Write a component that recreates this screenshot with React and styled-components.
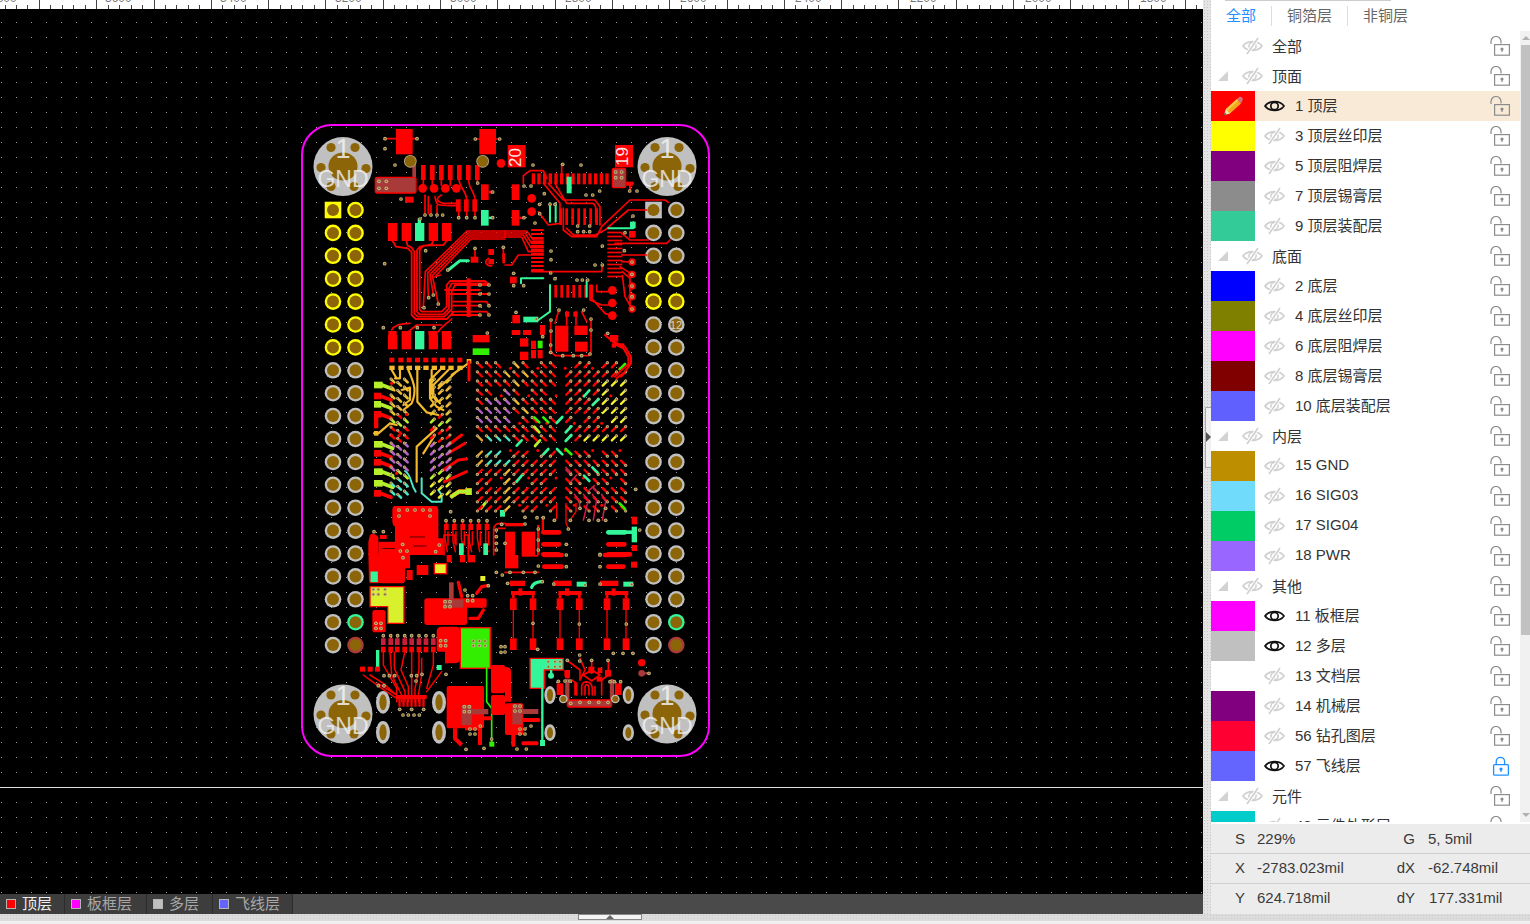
import React from "react";
import styled, { createGlobalStyle } from "styled-components";

const Global = createGlobalStyle`
  html, body { margin: 0; padding: 0; background: #fff; overflow: hidden; }
  #root { width: 1530px; height: 924px; }
  * { box-sizing: border-box; }
`;
const FONT = `"Liberation Sans", "Noto Sans CJK SC", Arial, sans-serif`;

const Page = styled.div`
  width: 1530px; height: 924px; display: flex; flex-direction: column; overflow: hidden; font-family: ${FONT}; position: relative;
`;
const Main = styled.div`display: flex; height: 914px;`;
const Canvas = styled.div`width: 1203px; display: flex; flex-direction: column;`;
const Ruler = styled.svg`display: block; width: 1203px; height: 9px; background: #fff; flex: none;`;
const Stage = styled.svg`display: block; width: 1203px; height: 885px; background: #000; flex: none;`;
const TabBar = styled.div`height: 20px; flex: none; background: #4a4a4a; display: flex;`;
const BoardTab = styled.div`
  display: flex; align-items: center; gap: 6px; padding-left: 6px; width: ${p => p.$w}px;
  background: #3d3d3d; border-right: 1px solid #2b2b2b; font-size: 15px; line-height: 20px;
  color: ${p => (p.$active ? "#f0f0f0" : "#a8a8a8")};
`;
const TabChip = styled.span`width: 10px; height: 10px; flex: none; background: ${p => p.$color}; border: 1px solid #b5b5b5;`;
const Splitter = styled.div`
  width: 8px; position: relative;
  background-color: #e4e4e4;
  background-image: radial-gradient(#c8c8c8 1px, transparent 1px);
  background-size: 3px 3px;
`;
const SplitHandle = styled.div`
  position: absolute; left: 2px; top: 407px; width: 6px; height: 61px; background: #efefef; border-left: 1px solid #aaa;
  border-top: 1px solid #aaa; border-bottom: 1px solid #aaa;
  &::after { content: ""; position: absolute; left: 0; top: 24px; border-left: 5px solid #555; border-top: 5px solid transparent; border-bottom: 5px solid transparent; }
`;
const Panel = styled.div`width: 319px; display: flex; flex-direction: column; background: #fff;`;
const LayerTabs = styled.div`height: 31px; flex: none; display: flex; align-items: center; position: relative; padding-top: 1px;
  &::before { content: ""; position: absolute; left: 14px; top: 0; width: 166px; height: 1px; background: #ccc; }
`;
const LayerTab = styled.div`
  height: 20px; line-height: 20px; padding: 0 15px; font-size: 15px; color: ${p => (p.$active ? "#1e90ff" : "#666")};
  border-right: ${p => (p.$last ? "none" : "1px solid #ddd")};
`;
const ListWrap = styled.div`height: 791px; flex: none; display: flex; overflow: hidden;`;
const List = styled.div`width: 309px; overflow: hidden;`;
const Row = styled.div`
  height: 30px; display: flex; align-items: center; padding-right: 10px; background: ${p => (p.$active ? "#f9ead8" : "transparent")};
`;
const Swatch = styled.div`width: 44px; height: 30px; flex: none; background: ${p => p.$color}; display: flex; align-items: center; justify-content: center;`;
const Caret = styled.div`width: 32px; height: 30px; flex: none; display: flex; align-items: flex-start; padding: 10px 0 0 7px;`;
const GroupEye = styled.div`width: 29px; flex: none; display: flex; margin-left: -1px; margin-right: 1px;`;
const ItemEye = styled.div`width: 40px; flex: none; display: flex; padding-left: 9px; margin-bottom: 1px;`;
const RowText = styled.div`font-size: 15px; color: #333; white-space: nowrap; padding-bottom: ${p => p.$lift}px;`;
const LockSlot = styled.div`margin-left: auto; width: 20px; height: 20px; flex: none;`;
const Scrollbar = styled.div`width: 10px; background: #f1f1f1; position: relative; padding-left: 1px; display: flex; flex-direction: column;`;
const ScrollArrow = styled.div`height: 14px; flex: none; display: flex; justify-content: center; align-items: center;
  &::after { content: ""; border-left: 4px solid transparent; border-right: 4px solid transparent;
    ${p => (p.$down ? "border-top: 4px solid #b0b0b0;" : "border-bottom: 4px solid #b0b0b0;")} }
`;
const ScrollThumb = styled.div`height: 590px; flex: none; background: #c1c1c1;`;
const ScrollRest = styled.div`flex: 1;`;
const Status = styled.div`margin-top: 2px; flex: 1; background: #ececec; display: flex; flex-direction: column;`;
const StatusRow = styled.div`
  height: 30px; display: flex; align-items: center; font-size: 15px; color: #3a3a3a; padding-bottom: ${p => p.$lift}px;
  border-bottom: ${p => (p.$last ? "none" : "1px solid #cfcfcf")};
`;
const StatLabel = styled.div`width: ${p => p.$w}px; text-align: right; flex: none;`;
const StatValue = styled.div`width: ${p => p.$w}px; margin-left: ${p => p.$m}px; flex: none; white-space: nowrap;`;
const Strip = styled.div`
  height: 7px; flex: none; background-color: #dcdcdc;
  background-image: radial-gradient(#c9c9c9 1px, transparent 1px); background-size: 3px 3px;
`;
const StripFoot = styled.div`height: 3px; flex: none; background: #f0f0f0;`;
const StripHandle = styled.div`
  position: absolute; left: 578px; top: 914px; width: 64px; height: 6px; background: #f4f4f4; border: 1px solid #888;
  &::after { content: ""; position: absolute; left: 27px; top: 0; border-left: 4px solid transparent; border-right: 4px solid transparent; border-bottom: 4px solid #666; }
`;

/* ---------- icons ---------- */
const EyeOpen = () => (
  <svg width="21" height="14" viewBox="0 0 21 14">
    <path d="M1 7C5 1.2 16 1.2 20 7C16 12.8 5 12.8 1 7Z" fill="none" stroke="#111" strokeWidth="1.7" />
    <circle cx="10.5" cy="7" r="3.7" fill="none" stroke="#111" strokeWidth="1.7" />
  </svg>
);
const EyeOff = () => (
  <svg width="21" height="18" viewBox="0 0 21 18">
    <path d="M1 9C5 3.2 16 3.2 20 9C16 14.8 5 14.8 1 9Z" fill="none" stroke="#d0d0d0" strokeWidth="1.7" />
    <circle cx="10.5" cy="9" r="3.6" fill="none" stroke="#d0d0d0" strokeWidth="1.5" />
    <path d="M16 1L5 17" stroke="#fff" strokeWidth="3.5" />
    <path d="M16 1L5 17" stroke="#cfcfcf" strokeWidth="1.6" />
  </svg>
);
const CaretIcon = () => (
  <svg width="10" height="10" viewBox="0 0 10 10"><path d="M10 0V10H0Z" fill="#d2d2d2" /></svg>
);
const LockIcon = () => (
  <svg width="20" height="20" viewBox="0 0 20 20">
    <path d="M1 8V5.5a5 5 0 0 1 10 0V7.5" fill="none" stroke="#8c8c8c" strokeWidth="1.2" />
    <rect x="4.6" y="8.6" width="14.8" height="10.6" fill="none" stroke="#8c8c8c" strokeWidth="1.2" />
    <circle cx="12" cy="13" r="1.6" fill="#8c8c8c" />
    <rect x="11.4" y="13" width="1.2" height="3" fill="#8c8c8c" />
  </svg>
);
const LockBlue = () => (
  <svg width="20" height="20" viewBox="0 0 20 20">
    <path d="M7 9V5.5a4.2 4.2 0 0 1 8.4 0V9" fill="none" stroke="#1e90ff" strokeWidth="1.3" transform="translate(-.8 0)" />
    <rect x="3.6" y="8.6" width="14.8" height="10.6" rx="1" fill="none" stroke="#1e90ff" strokeWidth="1.3" />
    <circle cx="11" cy="13" r="1.6" fill="#1e90ff" />
    <rect x="10.4" y="13" width="1.2" height="3" fill="#1e90ff" />
  </svg>
);
const Pencil = () => (
  <svg width="22" height="20" viewBox="0 0 22 20">
    <path d="M2 19L4 13L15 3L19 7.5L8 17.5Z" fill="#f1a91c" />
    <path d="M4 13L15 3L16.5 4.6L5.6 14.8Z" fill="#f8c84a" />
    <path d="M2 19L4 13L8 17.5Z" fill="#f5dfb4" />
    <path d="M2 19L2.8 16.8L4.4 18.2Z" fill="#333" />
    <path d="M15 3L17 1.2C18 .4 19 .6 20 1.6C21 2.6 21 3.8 20.4 4.6L19 7.5Z" fill="#d9707a" />
  </svg>
);

/* ---------- PCB helpers ---------- */
const RED = "#ff0000", MINT = "#33f59a", LIME = "#b6f02c", GOLD = "#f2b92e", PURP = "#b561c6", TEAL = "#4ae6c6", DKR = "#a83a3a", BRN = "#8b6508", GRN = "#33ee00";

const rects = (fill, list, rx = 0) => list.map((c, i) => (
  <rect key={fill + i + c[0] + "_" + c[1]} x={c[0]} y={c[1]} width={c[2] - c[0]} height={c[3] - c[1]} rx={rx} fill={fill} />
));
const lines = (color, w, d) => <path d={d} fill="none" stroke={color} strokeWidth={w} strokeLinecap="round" strokeLinejoin="round" />;
const dots = (fill, r, list) => list.map((c, i) => <circle key={fill + r + i + "_" + c[0] + "_" + c[1]} cx={c[0]} cy={c[1]} r={r} fill={fill} />);
const vias = list => list.map((c, i) => (
  <g key={"v" + i + "_" + c[0] + "_" + c[1]}>
    <circle cx={c[0]} cy={c[1]} r="5.6" fill="#c4b68c" />
    <circle cx={c[0]} cy={c[1]} r="2.8" fill={BRN} />
  </g>
));
const Z = ({ x, y, children }) => <g transform={`translate(${x} ${y}) scale(0.33333)`}>{children}</g>;

const GndPad = ({ cx, cy }) => (
  <g>
    <circle cx={cx} cy={cy} r="29.5" fill="#c0c0c0" />
    <ellipse cx={cx} cy={cy} rx="14.5" ry="14" fill={BRN} />
    {[[-12, -19], [12, -19], [-22, 1], [23, 2], [-12, 20], [11, 20]].map((o, i) => (
      <circle key={i} cx={cx + o[0]} cy={cy + o[1]} r="4.6" fill={BRN} />
    ))}
    <text x={cx} y={cy - 9} textAnchor="middle" fontSize="27" fontFamily={FONT} fill="#f2f2f2" fillOpacity=".85">1</text>
    <text x={cx} y={cy + 20} textAnchor="middle" fontSize="23" fontFamily={FONT} fill="#f2f2f2" fillOpacity=".8">GND</text>
  </g>
);
const HEAD_Y = i => 210 + i * 22.9;
const HolePad = ({ x, y, c, square }) => (
  <g>
    {square ? <rect x={x - 8.3} y={y - 8.3} width="16.6" height="16.6" fill={c} /> : <circle cx={x} cy={y} r="8.3" fill={c} />}
    <circle cx={x} cy={y} r="6" fill={BRN} />
  </g>
);
const Headers = () => {
  const out = [];
  for (let i = 0; i < 20; i++) {
    const y = HEAD_Y(i);
    const yl = i < 7 ? "#ffff00" : "#c0c0c0";
    out.push(<HolePad key={"a" + i} x={333} y={y} c={yl} square={i === 0} />);
    out.push(<HolePad key={"b" + i} x={355.5} y={y} c={i === 18 ? MINT : i === 19 ? DKR : yl} />);
    const rr = i === 3 || i === 4 ? "#ffff00" : "#c0c0c0";
    out.push(<HolePad key={"c" + i} x={653.5} y={y} c={rr} square={i === 0} />);
    out.push(<HolePad key={"d" + i} x={676.3} y={y} c={i === 18 ? MINT : i === 19 ? DKR : rr} />);
  }
  return <g>{out}</g>;
};

/* top-left quadrant, coordinates as read at 3x from (295,115) */
const Q1 = () => {
  const diag = [0, 1, 2, 3, 4].map(k => `M630 ${348 + k * 6} L${516 + k * 3} ${348 + k * 6} L${391 + k * 7} ${470 + k * 4} L${[385, 400, 415, 430, 436][k]} ${[575, 548, 540, 567, 480][k]}`).join(" ");
  return (
    <Z x={295} y={115}>
      {lines(RED, 5, "M270 71H303M353 71H366M541 72H553M603 72H614")}
      {lines(RED, 5.5, "M293 378L303 395L338 400L350 412V600L362 612H455L475 592M334 378L338 392L350 398L358 410V595L368 605H448L470 583V530L480 510H580M414 378L410 388L375 395L366 405V590L373 598H445L462 580V520L470 505H580M455 378L445 390L385 392L374 405V583L380 590H440L455 575V510L465 498H570L582 510")}
      {lines(RED, 5.5, "M450 525H555M455 537H582M475 560H575L582 572M470 572H555M470 590H575L582 600M470 600H555")}
      {lines(RED, 5, diag)}
      {lines(RED, 5, "M390 240V295M400 245V296M420 245C425 270 420 272 470 272H490M440 240C420 250 425 260 445 265H490M385 195V210M412 195V210M439 195V210M466 195V210M492 195C495 220 515 230 515 255M520 195C525 230 540 230 540 255M547 195V208M408 270V295M426 272V295M491 290V305M515 290V305M540 290V305")}
      {lines(MINT, 9, "M460 465L495 437H520")}
      {lines(RED, 5, "M540 402V430M580 430C565 440 575 455 590 452M625 400V430")}
      {rects(RED, [[303, 42, 353, 118], [553, 42, 603, 118]])}
      {rects(RED, [[378, 150, 392, 195], [405, 150, 419, 195], [432, 150, 446, 195], [459, 150, 473, 195], [486, 150, 500, 195], [513, 150, 527, 195], [540, 150, 554, 195], [558, 208, 581, 255], [581, 227, 595, 235], [330, 245, 356, 263], [483, 253, 497, 290], [507, 253, 521, 290], [532, 253, 546, 290], [279, 324, 307, 378], [320, 324, 348, 378], [401, 324, 429, 378], [441, 324, 469, 378], [527, 425, 550, 443], [580, 402, 597, 420], [622, 415, 630, 445], [580, 432, 597, 448], [515, 490, 527, 606], [280, 648, 305, 660], [320, 648, 348, 660], [400, 648, 428, 660], [440, 648, 468, 660]])}
      {rects(MINT, [[360, 324, 388, 378], [558, 285, 581, 332], [581, 305, 595, 312], [368, 310, 378, 325], [360, 648, 388, 660]])}
      {lines(RED, 5, "M290 645C300 625 330 625 345 625M340 650L365 630H440M430 650C440 635 450 630 470 612")}
      <rect x="352" y="150" width="11" height="40" fill={DKR} />
      <rect x="241" y="187" width="122" height="47" rx="5" fill={DKR} stroke={RED} strokeWidth="4" />
      {dots(RED, 13, [[383, 220], [417, 220], [451, 220], [484, 220], [618, 145]])}
      {dots("#b9a98a", 19, [[346, 139], [563, 139]])}
      {dots(BRN, 16.5, [[346, 139], [563, 139]])}
      {vias([[270, 71], [366, 71], [270, 101], [541, 72], [614, 72], [300, 150], [252, 199], [274, 199], [252, 220], [274, 220], [318, 252], [390, 300], [408, 300], [426, 300], [443, 300], [491, 308], [515, 308], [540, 308], [593, 231], [593, 308], [375, 312], [548, 204], [392, 407], [269, 446], [540, 400], [625, 397], [458, 465], [401, 548], [415, 540], [430, 567], [387, 578], [555, 510], [582, 510], [555, 537], [582, 537], [555, 572], [582, 572], [555, 600], [582, 600], [265, 638], [316, 638], [367, 638], [417, 638], [577, 654]])}
    </Z>
  );
};

/* top-right quadrant */
const Q2 = () => {
  const top = [];
  for (let i = 0; i < 14; i++) top.push([80 + i * 17, 175, 90 + i * 17, 208]);
  const comb = [];
  for (let i = 0; i < 7; i++) comb.push([163 + i * 18, 280, 171 + i * 18, 330]);
  const hl = [];
  for (let i = 0; i < 11; i++) hl.push([78, 342 + i * 12, 116, 348 + i * 12]);
  const hr = [];
  for (let i = 0; i < 12; i++) hr.push([307, 350 + i * 12, 352, 355 + i * 12]);
  const bot = [];
  for (let i = 0; i < 7; i++) bot.push([148 + i * 18, 510, 156 + i * 18, 548]);
  return (
    <Z x={505} y={115}>
      {lines(RED, 5, "M0 348H65L85 375H115M0 354H60L80 385H115M0 360H55L78 398H115M0 366H50L70 410H115")}
      {lines(RED, 5, "M55 205V182L75 167H115L125 190M130 205L175 255H270L285 275V330M150 205L185 265H265L272 275V320M115 205L165 265L165 325L130 330L100 290M170 150V205M0 450H20L40 420H115M80 470H290L292 450")}
      {lines(RED, 5, "M490 262L480 255H375L290 335L275 365H200L175 345V280M425 285H370L300 345L270 360H205L185 340M495 375L485 385H330M425 420H350M350 355L375 375H430")}
      {lines(RED, 5, "M352 470L375 490V578M345 455L381 478M350 440L381 441M352 482L360 545L381 582M260 510V550L300 595L322 602M275 510V530H320M255 510V555L290 570H322")}
      {rects(RED, top)}
      {rects(RED, comb)}
      {rects(RED, hl)}
      {rects(RED, hr)}
      {rects(RED, bot)}
      {rects(RED, [[8, 90, 62, 157], [330, 90, 384, 157], [20, 208, 43, 255], [20, 285, 43, 332], [43, 305, 57, 312], [360, 200, 384, 212], [372, 348, 392, 368], [15, 485, 35, 505], [180, 590, 192, 605], [205, 590, 218, 605], [22, 600, 45, 625], [20, 645, 46, 660], [54, 645, 78, 660], [150, 632, 190, 660], [208, 632, 248, 660], [105, 630, 120, 660]])}
      {lines(RED, 5, "M230 590L245 620M160 590L150 625M137 620V660M258 610V660M185 590V630M213 590V630")}
      {lines(MINT, 6, "M310 340H385V322M135 265V320M48 505V490H115M245 495V545M135 510V590L100 615M152 265V320")}
      {rects(MINT, [[185, 185, 200, 235], [55, 605, 100, 622], [375, 320, 392, 340]])}
      <rect x="322" y="160" width="40" height="58" rx="5" fill={DKR} stroke={RED} strokeWidth="4" />
      {lines(RED, 6, "M362 205H384M375 205V228")}
      {dots(RED, 13, [[80, 250], [80, 290], [322, 526], [322, 564], [322, 602]])}
      {dots(RED, 11, [[381, 441], [381, 478], [381, 513], [381, 545], [381, 582]])}
      {vias([[84, 150], [173, 148], [228, 150], [332, 171], [350, 171], [332, 188], [350, 188], [374, 228], [396, 228], [57, 213], [78, 213], [118, 236], [243, 240], [263, 240], [284, 228], [104, 268], [135, 268], [150, 268], [104, 296], [57, 308], [90, 324], [218, 333], [254, 333], [218, 350], [236, 350], [254, 350], [360, 353], [292, 393], [358, 407], [138, 408], [138, 434], [270, 450], [292, 450], [381, 441], [381, 478], [381, 513], [381, 545], [381, 582], [137, 474], [26, 475], [150, 491], [216, 495], [232, 495], [248, 495], [26, 512], [56, 512], [33, 592], [162, 585], [236, 585], [258, 612], [138, 615], [94, 612], [138, 648], [258, 645], [308, 655], [384, 303]])}
    </Z>
  );
};

/* dog-bone field that makes up the BGA */
const Bga = () => {
  const cells = [];
  for (let j = 0; j < 16; j++) {
    for (let i = 0; i < 16; i++) {
      const x = -66 + 27.4 * i, y = 100 + 27.4 * j;
      const sx = i < 8.5 ? -1 : 1, sy = j < 8.5 ? -1 : 1;
      if ((i * 3 + j * 7) % 9 === 0 && i > 1) {
        cells.push(<circle key={i + "d" + j} cx={x} cy={y} r="4.5" fill={RED} />);
        continue;
      }
      let c = RED;
      if (i >= 13 && j >= 2 && j <= 6) c = "#f3f02e";
      if (i >= 11 && j === 8) c = "#f3f02e";
      if (i >= 3 && i <= 5 && j <= 5 && (i + j) % 2 === 0) c = GOLD;
      if (i <= 3 && j >= 3 && j <= 6 && i + j > 4) c = PURP;
      if (i <= 3 && j >= 8 && j <= 10) c = i === 0 ? "#e8a52e" : TEAL;
      if (i === 3 && j >= 11) c = GOLD;
      if (j >= 11 && i > 8 && i < 13 && j < 14 && (i + j) % 5 === 0) c = "#c0203a";
      const dx = sx * 17, dy = sy * 17;
      const bx = x + sx * 3, by = y + sy * 3;
      cells.push(
        <g key={i + "c" + j}>
          <path d={`M${bx} ${by}L${x + dx} ${y + dy}`} stroke={c} strokeWidth="7" strokeLinecap="round" />
          <circle cx={x + dx} cy={y + dy} r="4.8" fill="#c4b68c" />
          <circle cx={x + dx} cy={y + dy} r="2.4" fill={BRN} />
        </g>
      );
    }
  }
  return <g>{cells}</g>;
};

/* left BGA neighbour and parts below */
const Q3 = () => {
  const left = [[237, 150, 285, LIME], [237, 183, 280, RED], [237, 208, 280, LIME], [237, 238, 280, RED], [237, 328, 285, LIME], [237, 355, 280, RED], [237, 382, 280, RED], [237, 410, 285, LIME], [237, 445, 285, LIME], [237, 475, 280, RED]];
  const right = [[470, 140, RED], [470, 165, LIME], [470, 190, RED], [470, 215, LIME], [470, 290, RED], [470, 315, RED], [470, 345, LIME], [470, 375, RED], [470, 400, RED], [470, 435, LIME], [470, 460, RED], [470, 490, LIME]];
  const bones = [];
  [[288, 0], [308, 1], [328, 2], [418, 0], [442, 1], [465, 2]].forEach(([x, o]) => {
    for (let j = 0; j < 15; j++) {
      const y = 132 + j * 24 + (o % 2) * 10;
      if (y > 490) continue;
      let c = RED;
      if (y < 230) c = j % 2 ? GOLD : "#e8c22e";
      if (y > 250 && y < 300 && j % 2) c = LIME;
      if (y > 310 && y < 400) c = PURP;
      if (y > 420) c = x < 400 ? TEAL : "#e8f02e";
      if (y > 400 && y <= 420) c = LIME;
      const s = x < 400 ? 1 : -1;
      bones.push(
        <g key={x + "b" + j}>
          <path d={`M${x} ${y}L${x + s * 10} ${y + 10}`} stroke={c} strokeWidth="8" strokeLinecap="round" />
          <circle cx={x} cy={y} r="4.5" fill="#c4b68c" />
          <circle cx={x} cy={y} r="2.2" fill={BRN} />
        </g>
      );
    }
  });
  const sq = [283, 310, 335, 360, 385, 410, 435, 460, 487];
  return (
    <Z x={295} y={335}>
      {rects(RED, [[279, 0, 307, 43], [320, 0, 348, 43], [401, 0, 429, 43], [441, 0, 469, 43], [533, 0, 583, 22]])}
      {rects(MINT, [[360, 0, 388, 43]])}
      {rects(GRN, [[533, 40, 583, 60]])}
      {rects(RED, sq.map(x => [x, 68, x + 15, 82]))}
      {rects(GOLD, sq.map(x => [x, 92, x + 16, 105]))}
      {rects(GOLD, [[515, 72, 529, 86]])}
      {lines(GOLD, 6.5, "M367 105V200L395 232L430 240M315 105V130L300 130M340 105C360 150 365 170 350 205L325 225M290 105L305 130M410 105V175L425 200M435 105L405 135V190L425 215L445 225M460 105L415 150V180L435 205M490 105L430 160M520 85L470 120M425 280L365 335V440M420 300L385 355M320 165L345 158V195L325 210")}
      {lines(GOLD, 6.5, "M237 295H250L285 265L305 270")}
      {lines(TEAL, 6, "M330 408C350 420 345 445 362 470M380 430V475L410 500H440V480L430 465")}
      {left.map((l, i) => <g key={"l" + i}>{rects(l[3], [[l[0], l[1] - 10, l[2] - 22, l[1] + 10]])}{lines(l[3], 11, `M${l[2] - 24} ${l[1]}L${l[2] + 8} ${l[1] + 12}`)}</g>)}
      {right.map((l, i) => <g key={"r" + i}>{rects(l[2], [[512, l[0] - 10, 530, l[0] + 10]])}{lines(l[2], 11, `M515 ${l[0]}H492L${l[0] % 2 ? 462 : 470} ${l[0] + 14}`)}</g>)}
      {lines(RED, 9, "M522 80V135M460 330L500 300M460 355L510 325M445 405L490 375L515 372M448 440L515 410")}
      {rects(RED, [[237, 228, 250, 280]])}
      {rects(GOLD, [[237, 288, 250, 302]])}
      {bones}
      {dots(RED, 5, [[290, 145], [335, 238], [290, 302], [312, 302], [305, 415]])}
      {lines(LIME, 9, "M558 520L570 505")}
      {/* power block under the left fan-out */}
      <path d="M300 513H420Q430 513 430 525V610H445V660H250V620H300V575Q292 570 292 560V525Q292 513 300 513Z" fill={RED} />
      <path d="M225 600Q235 590 250 605V660H220V620Z" fill={RED} />
      {rects(RED, [[255, 600, 275, 612]])}
      {rects("#000", [[355, 632, 395, 634], [345, 605, 390, 607], [260, 640, 300, 642]])}
      {[447, 471, 496, 520, 544, 569].map((x, i) => <g key={x}>{rects(RED, [[x, 567, x + 14, 585]])}{lines(RED, 4.5, `M${x + 7} 560V570M${x + 3} 585V${610 + (i % 2) * 10}L${x + 10} 650M${x + 12} 590V630`)}</g>)}
      {lines(RED, 5, "M447 660V600H480V625M520 660V600H510M596 660V580Q600 565 615 565H630M610 580H630")}
      {rects(MINT, [[492, 625, 506, 660], [565, 625, 579, 660], [615, 525, 630, 545]])}
      {vias([[312, 525], [337, 525], [360, 525], [384, 525], [405, 525], [312, 543], [405, 543], [467, 530], [453, 557], [478, 557], [503, 557], [527, 557], [551, 557], [576, 557], [237, 590], [265, 590], [323, 628], [433, 630], [316, 648], [336, 648], [422, 650], [620, 568], [604, 585], [604, 605], [604, 625], [604, 645]])}
    </Z>
  );
};

const Q4 = () => (
  <Z x={505} y={335}>
    <Bga />
    {lines(MINT, 8, "M237 184L253 166M263 210L280 193M155 264L172 246M182 292L199 274M182 318L199 300M115 358L130 342M156 342L172 358M35 332L50 316M35 440L50 422M262 397L278 413M237 422L253 438")}
    {lines(GRN, 8, "M344 103L360 87M88 247L103 262M115 247L130 262M182 342L199 358M344 505L360 522")}
    {lines(LIME, 8, "M88 275L103 292M90 333L105 316")}
    {lines("#d01e46", 4.5, "M182 397L197 412M215 420L197 440M268 452L250 468M208 478L222 495L225 520M235 478L250 495L235 555M262 478L275 495L265 555M290 478L302 500L292 555")}
    {lines(RED, 4, "M155 505V550L148 555M183 505V565L190 580M213 505V530L196 555")}
    {lines(RED, 6, "M300 0L325 20L360 35L378 65V85L360 110L335 130M300 0L335 30L355 40L370 65V88L350 105L330 125")}
    {rects(RED, [[315, 0, 340, 20], [320, 25, 333, 38], [345, 25, 358, 38], [45, 10, 70, 35], [45, 50, 70, 75], [78, 17, 93, 42], [78, 45, 93, 70], [98, 45, 113, 70], [150, 0, 190, 50], [210, 20, 248, 50], [380, 545, 396, 568], [380, 630, 396, 648]])}
    {rects(GRN, [[98, 17, 113, 40]])}
    {lines(RED, 5, "M137 0V50L150 62H250L258 50V0")}
    {lines(RED, 14, "M115 592H162M115 628H162M310 628H358M115 658H160M310 658H375")}
    {lines(MINT, 14, "M310 592H360")}
    {rects(MINT, [[380, 575, 396, 622], [360, 586, 385, 597]])}
    {rects(RED, [[0, 564, 55, 574], [0, 590, 30, 660], [50, 590, 90, 660], [110, 550, 117, 590], [96, 570, 103, 660]])}
    {vias([[113, 5], [137, 30], [137, 52], [173, 62], [205, 62], [230, 62], [255, 57], [392, 463], [60, 547], [60, 567], [96, 548], [115, 548], [100, 582], [100, 615], [100, 645], [148, 556], [190, 582], [196, 556], [225, 520], [252, 556], [280, 556], [302, 556], [302, 520], [184, 628], [404, 585], [285, 658], [0, 625]])}
  </Z>
);

const Q5 = () => {
  const tops = [258, 280, 300, 322, 343, 365, 386, 408];
  return (
    <Z x={295} y={555}>
      <path d="M220 -5H345V40H330V75Q330 85 320 85H260Q250 85 245 78H222Z" fill={RED} />
      {rects(RED, [[335, 45, 353, 75], [365, 30, 400, 60], [455, 0, 470, 22], [495, 0, 510, 22], [518, 0, 540, 22]])}
      <rect x="225" y="48" width="25" height="35" fill={MINT} stroke={RED} strokeWidth="3" />
      <rect x="418" y="26" width="36" height="30" fill="#e6f02e" stroke={RED} strokeWidth="4" />
      <rect x="556" y="63" width="15" height="15" fill="#e6f02e" />
      <path d="M225 95H327V205H278V155H225Z" fill="#d9f02c" stroke={RED} strokeWidth="4" strokeLinejoin="round" />
      <rect x="232" y="165" width="40" height="67" rx="8" fill={RED} />
      <rect x="388" y="130" width="128" height="80" rx="8" fill={RED} />
      <rect x="505" y="130" width="70" height="28" rx="5" fill={RED} />
      {lines(RED, 10, "M490 82L500 125M545 115L560 95L578 92M525 190H550L565 165")}
      <rect x="445" y="133" width="60" height="25" fill={DKR} />
      <rect x="462" y="82" width="14" height="50" fill={DKR} />
      <path d="M440 215H485Q495 215 495 230V310Q495 325 480 325H450V290H430Q425 290 425 280V230Q425 215 440 215Z" fill={RED} />
      <rect x="496" y="218" width="90" height="122" fill={GRN} stroke={RED} strokeWidth="4" />
      {lines(GRN, 5, "M575 340V440L590 460V570")}
      {rects(GRN, [[583, 560, 598, 575]])}
      {rects(MINT, [[243, 285, 253, 345], [425, 330, 440, 345]])}
      {tops.map(x => <g key={x}>{rects("#c81e3c", [[x, 250, x + 14, 270]])}{rects(RED, [[x, 275, x + 14, 292]])}{lines(RED, 3, `M${x + 7} 240V250`)}</g>)}
      {lines(RED, 4.5, "M265 292V330L305 400V440M285 292L290 360L320 420V440M298 292V340L330 410V440M329 292L318 345L340 395V440M350 292V350L350 440M372 292V345L360 400V440M380 310V360L370 420V440M415 292V330L395 400M440 350L395 410M205 360L260 400L305 430M225 360L265 385L315 430M248 385L305 420")}
      {rects(RED, [[195, 335, 210, 350], [218, 335, 233, 350], [240, 335, 255, 350], [305, 420, 395, 432]])}
      {[310, 322, 334, 346, 358, 370, 382].map(x => <g key={x}>{rects(RED, [[x, 432, x + 7, 455]])}</g>)}
      {[[264, 442, 34], [432, 442, 34], [264, 532, 34], [432, 532, 34]].map((o, i) => (
        <g key={i}>
          <ellipse cx={o[0]} cy={o[1]} rx="21" ry={o[2]} fill="#c0c0c0" />
          <ellipse cx={o[0]} cy={o[1]} rx="11" ry={o[2] - 10} fill={BRN} />
        </g>
      ))}
      <rect x="455" y="393" width="112" height="127" rx="6" fill={RED} />
      <rect x="588" y="330" width="42" height="85" rx="6" fill={RED} />
      <rect x="588" y="420" width="42" height="60" rx="6" fill={RED} />
      <path d="M480 520V550L500 570M510 520H555V570M540 490H590" fill="none" stroke={RED} strokeWidth="12" />
      <rect x="500" y="450" width="30" height="60" fill={DKR} />
      <rect x="530" y="462" width="50" height="16" fill={DKR} />
      {vias([[324, 8], [235, 103], [250, 103], [270, 103], [235, 118], [250, 118], [270, 118], [243, 205], [258, 205], [243, 220], [258, 220], [450, 140], [465, 140], [450, 155], [465, 155], [510, 105], [580, 92], [518, 122], [533, 122], [518, 137], [533, 137], [437, 257], [452, 257], [437, 272], [452, 272], [535, 258], [553, 258], [570, 258], [535, 272], [553, 272], [570, 272], [267, 362], [283, 362], [299, 362], [349, 362], [365, 362], [381, 358], [363, 378], [453, 358], [250, 392], [267, 392], [314, 463], [350, 463], [386, 463], [324, 480], [340, 480], [357, 480], [373, 480], [508, 455], [523, 455], [508, 470], [523, 470], [525, 522], [540, 522], [525, 537], [540, 537], [513, 583], [567, 580], [556, 513], [590, 552], [618, 275], [618, 292], [604, 52], [622, 60], [265, 242], [287, 242], [308, 242], [329, 242], [350, 242], [372, 242], [393, 242], [415, 242]])}
    </Z>
  );
};

const Q6 = () => {
  const cols = [25, 84, 165, 223, 306, 363];
  return (
    <Z x={505} y={555}>
      {lines(RED, 14, "M118 0H170M118 35H170M300 0H360M310 35H355")}
      {lines(RED, 5, "M0 52H100")}
      {rects(RED, [[0, 0, 40, 40], [50, 0, 100, 5], [378, 20, 396, 38]])}
      {cols.map(x => (
        <g key={x}>
          {rects(RED, [[x - 10, 130, x + 10, 165], [x - 10, 250, x + 10, 285], [x - 2, 165, x + 2, 250], [x - 4, 118, x + 4, 130]])}
        </g>
      ))}
      {rects(RED, [[18, 108, 90, 120], [160, 108, 230, 120], [300, 108, 370, 120]])}
      {rects(RED, [[15, 77, 60, 93], [145, 77, 200, 93], [285, 77, 340, 93], [40, 100, 52, 122], [180, 100, 192, 122], [320, 100, 332, 122]])}
      {rects(MINT, [[215, 80, 245, 95], [355, 80, 385, 95]])}
      {lines(MINT, 10, "M80 97Q85 82 108 80")}
      <path d="M75 310H175V345H118V400H75Z" fill={MINT} stroke={RED} strokeWidth="4" strokeLinejoin="round" />
      {lines(MINT, 7, "M112 400L112 560")}
      {rects(MINT, [[105, 555, 120, 573]])}
      {rects(MINT, [[135, 345, 142, 360]])}
      {dots(MINT, 9, [[138, 362]])}
      {rects(RED, [[155, 385, 175, 420], [330, 385, 350, 420], [178, 345, 195, 365], [250, 335, 268, 355], [278, 338, 292, 355], [300, 345, 318, 365], [180, 358, 195, 370], [275, 365, 292, 380]])}
      {lines(RED, 5, "M185 315L225 345V375M200 375L215 385V420M225 310L240 345L225 375M260 320V355M310 320V360L290 375V420M210 420V385M230 420V395C230 375 260 375 262 400V420M240 420V400C240 385 250 385 252 400V420M270 420V395M235 360L260 378L285 360L260 345Z")}
      <rect x="187" y="435" width="133" height="21" rx="5" fill={DKR} stroke={RED} strokeWidth="4" />
      {lines(DKR, 13, "M187 378V430M321 378V430")}
      {[[135, 420, 27], [370, 420, 27], [135, 533, 25], [370, 533, 25]].map((o, i) => (
        <g key={i}>
          <ellipse cx={o[0]} cy={o[1]} rx="17" ry={o[2]} fill="#c0c0c0" />
          <ellipse cx={o[0]} cy={o[1]} rx="9" ry={o[2] - 8} fill={BRN} />
        </g>
      ))}
      {dots("#c0c0c0", 13, [[175, 432], [331, 432]])}
      {dots(BRN, 9, [[175, 432], [331, 432]])}
      {dots(RED, 11, [[410, 323]])}
      {dots(DKR, 10, [[410, 355]])}
      {lines(DKR, 6, "M410 355H432")}
      <path d="M0 335Q18 335 18 350V440H0Z" fill={RED} />
      <rect x="0" y="445" width="55" height="95" rx="6" fill={RED} />
      {lines(RED, 12, "M55 495H100M55 565H95M25 540V570")}
      <rect x="22" y="448" width="30" height="60" fill={DKR} />
      <rect x="50" y="462" width="50" height="15" fill={DKR} />
      {vias([[184, 0], [285, 0], [15, 52], [55, 52], [90, 52], [100, 33], [184, 35], [285, 35], [8, 85], [112, 80], [146, 87], [240, 90], [285, 87], [380, 88], [84, 205], [223, 207], [364, 207], [98, 283], [0, 275], [0, 291], [325, 295], [354, 295], [384, 295], [224, 300], [224, 318], [187, 316], [260, 316], [309, 316], [130, 320], [150, 320], [165, 320], [130, 335], [150, 335], [165, 335], [160, 379], [347, 380], [197, 445], [225, 442], [253, 442], [281, 442], [309, 442], [180, 378], [195, 378], [315, 380], [328, 380], [432, 355], [30, 453], [45, 453], [30, 468], [45, 468], [45, 522], [60, 522], [45, 537], [60, 537], [36, 582], [64, 582], [78, 513]])}
    </Z>
  );
};

const BoardLabels = () => (
  <g fontFamily={FONT} fill="#f5e6e6" fontSize="17">
    <text transform="translate(521 167) rotate(-90)">20</text>
    <text transform="translate(628 166) rotate(-90)">19</text>
    <text x="670" y="329" fontSize="11" fill="#e8e8e8" fillOpacity=".8">12</text>
  </g>
);

const Ticks = () => {
  const out = [];
  for (let x = -17.9 + 0.0, k = 0; x < 1210; x += 11.46, k++) {
    const major = k % 5 === 0;
    out.push(<line key={k} x1={x} x2={x} y1={major ? 0 : 5} y2={9} stroke="#444" strokeWidth="1" shapeRendering="crispEdges" />);
  }
  const labels = [["3800", -10], ["3600", 105], ["3400", 220], ["3200", 335], ["3000", 450], ["2800", 565], ["2600", 680], ["2400", 795], ["2200", 910], ["2000", 1025], ["1800", 1140]];
  return (
    <>
      {out}
      {labels.map(l => <text key={l[0]} x={l[1]} y={2} fontSize="12" fontFamily={FONT} fill="#777">{l[0]}</text>)}
    </>
  );
};

const group = (name, eye) => ({ type: "g", name, eye });
const item = (name, color, on, extra) => ({ type: "i", name, color, on, ...extra });
const ROWS = [
  { type: "g", name: "全部", noCaret: true },
  group("顶面"),
  item("1 顶层", "#ff0000", true, { active: true, pencil: true }),
  item("3 顶层丝印层", "#ffff00"),
  item("5 顶层阻焊层", "#800080"),
  item("7 顶层锡膏层", "#8c8c8c"),
  item("9 顶层装配层", "#33cc99"),
  group("底面"),
  item("2 底层", "#0000ff"),
  item("4 底层丝印层", "#808000"),
  item("6 底层阻焊层", "#ff00ff"),
  item("8 底层锡膏层", "#800000"),
  item("10 底层装配层", "#6060ff"),
  group("内层"),
  item("15 GND", "#bc8e00"),
  item("16 SIG03", "#70dbfa"),
  item("17 SIG04", "#00cc66"),
  item("18 PWR", "#9966ff"),
  group("其他"),
  item("11 板框层", "#ff00ff", true),
  item("12 多层", "#c0c0c0", true),
  item("13 文档层", "#ffffff"),
  item("14 机械层", "#800080"),
  item("56 钻孔图层", "#ff0033"),
  item("57 飞线层", "#6464ff", true, { blue: true }),
  group("元件"),
  item("48 元件外形层", "#00cccc"),
];

const LayerRow = ({ r }) =>
  r.type === "g" ? (
    <Row>
      <Caret>{!r.noCaret && <CaretIcon />}</Caret>
      <GroupEye><EyeOff /></GroupEye>
      <RowText $lift={2}>{r.name}</RowText>
      <LockSlot><LockIcon /></LockSlot>
    </Row>
  ) : (
    <Row $active={r.active}>
      <Swatch $color={r.color}>{r.pencil && <Pencil />}</Swatch>
      <ItemEye>{r.on ? <EyeOpen /> : <EyeOff />}</ItemEye>
      <RowText $lift={4}>{r.name}</RowText>
      <LockSlot>{r.blue ? <LockBlue /> : <LockIcon />}</LockSlot>
    </Row>
  );

export default function App() {
  return (
    <Page>
      <Global />
      <Main>
        <Canvas>
          <Ruler viewBox="0 0 1203 9"><Ticks /></Ruler>
          <Stage viewBox="0 9 1203 885">
            <defs>
              <pattern id="grid" x="1" y="7" width="15" height="15" patternUnits="userSpaceOnUse">
                <rect width="1" height="1" fill="#9a9a9a" />
              </pattern>
            </defs>
            <rect x="0" y="9" width="1203" height="885" fill="url(#grid)" />
            <line x1="0" x2="1203" y1="787.5" y2="787.5" stroke="#e0e0e0" />
            <rect x="302" y="125" width="407" height="631" rx="30" fill="none" stroke="#ff00ff" strokeWidth="2" />
            <Headers />
            <Q1 /><Q2 /><Q3 /><Q4 /><Q5 /><Q6 />
            <GndPad cx={343} cy={166.5} />
            <GndPad cx={667} cy={166.5} />
            <GndPad cx={343} cy={714} />
            <GndPad cx={667} cy={714} />
            <BoardLabels />
          </Stage>
          <TabBar>
            <BoardTab $w={65} $active><TabChip $color="#ff0000" />顶层</BoardTab>
            <BoardTab $w={82}><TabChip $color="#ff00ff" />板框层</BoardTab>
            <BoardTab $w={66}><TabChip $color="#c0c0c0" />多层</BoardTab>
            <BoardTab $w={80}><TabChip $color="#6464ff" />飞线层</BoardTab>
          </TabBar>
        </Canvas>
        <Splitter><SplitHandle /></Splitter>
        <Panel>
          <LayerTabs>
            <LayerTab $active>全部</LayerTab>
            <LayerTab>铜箔层</LayerTab>
            <LayerTab $last>非铜层</LayerTab>
          </LayerTabs>
          <ListWrap>
            <List>{ROWS.map(r => <LayerRow key={r.name} r={r} />)}</List>
            <Scrollbar>
              <ScrollArrow />
              <ScrollThumb />
              <ScrollRest />
              <ScrollArrow $down />
            </Scrollbar>
          </ListWrap>
          <Status>
            <StatusRow $lift={0}>
              <StatLabel $w={34}>S</StatLabel><StatValue $w={128} $m={12}>229%</StatValue>
              <StatLabel $w={30}>G</StatLabel><StatValue $w={100} $m={13}>5, 5mil</StatValue>
            </StatusRow>
            <StatusRow $lift={2}>
              <StatLabel $w={34}>X</StatLabel><StatValue $w={128} $m={12}>-2783.023mil</StatValue>
              <StatLabel $w={30}>dX</StatLabel><StatValue $w={100} $m={13}>-62.748mil</StatValue>
            </StatusRow>
            <StatusRow $lift={3} $last>
              <StatLabel $w={34}>Y</StatLabel><StatValue $w={128} $m={12}>624.718mil</StatValue>
              <StatLabel $w={30}>dY</StatLabel><StatValue $w={100} $m={14}>177.331mil</StatValue>
            </StatusRow>
          </Status>
        </Panel>
      </Main>
      <Strip />
      <StripFoot />
      <StripHandle />
    </Page>
  );
}
